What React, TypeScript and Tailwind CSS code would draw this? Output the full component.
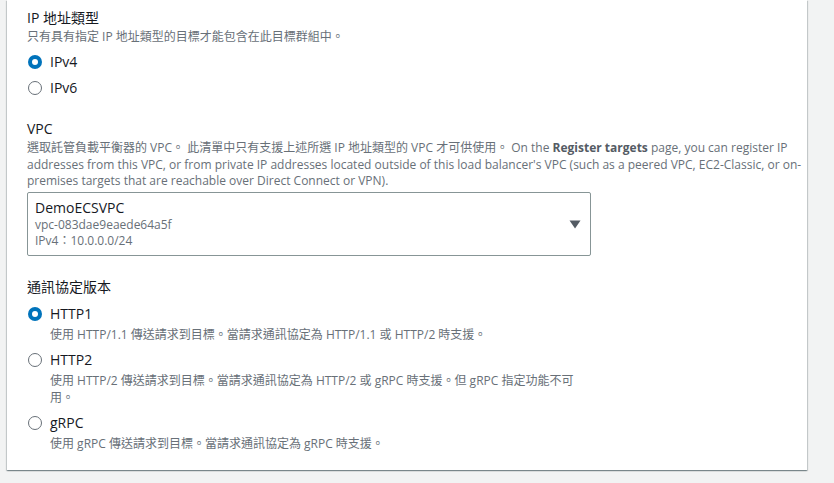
import React from "react";

const FONT = {
  fontFamily:
    '"Open Sans", "Noto Sans CJK TC", "Noto Sans", sans-serif',
};

function Radio({ checked }: { checked: boolean }) {
  return checked ? (
    <span className="flex h-[14px] w-[14px] shrink-0 items-center justify-center rounded-full bg-[#0073bb]">
      <span className="h-[6px] w-[6px] rounded-full bg-white" />
    </span>
  ) : (
    <span className="h-[14px] w-[14px] shrink-0 rounded-full border border-[#687078] bg-white" />
  );
}

function Option({
  label,
  checked,
  desc,
}: {
  label: string;
  checked: boolean;
  desc?: string;
}) {
  return (
    <div className="flex gap-[8px]">
      <div className="flex h-[22px] items-center pl-[1px]">
        <Radio checked={checked} />
      </div>
      <div className="flex flex-col">
        <span className="text-[14px] leading-[22px] text-[#16191f]">{label}</span>
        {desc && (
          <span className="mt-[1px] w-[536px] text-[12px] leading-[17px] text-[#687078]">
            {desc}
          </span>
        )}
      </div>
    </div>
  );
}

export default function App() {
  return (
    <div
      className="h-[483px] w-[834px] overflow-hidden bg-[#f2f3f3]"
      style={FONT}
    >
      <div className="ml-[7px] w-[800px] bg-white pb-[18px] pl-[20px] pr-[20px] pt-[7px] shadow-[0_1px_1px_0_rgba(0,28,36,0.3),1px_1px_1px_0_rgba(0,28,36,0.15),-1px_1px_1px_0_rgba(0,28,36,0.15)]">
        {/* IP address type */}
        <div className="flex flex-col">
          <span className="text-[14px] leading-[22px] text-[#16191f]">IP 地址類型</span>
          <span className="text-[12px] leading-[16px] text-[#687078]">
            只有具有指定 IP 地址類型的目標才能包含在此目標群組中。
          </span>
          <div className="mt-[6px] flex flex-col gap-[4px]">
            <Option label="IPv4" checked />
            <Option label="IPv6" checked={false} />
          </div>
        </div>

        {/* VPC */}
        <div className="mt-[19px] flex flex-col">
          <span className="text-[14px] leading-[22px] text-[#16191f]">VPC</span>
          <p className="w-[777px] text-[12px] leading-[16.5px] text-[#687078]">
            選取託管負載平衡器的 VPC。 此清單中只有支援上述所選 IP 地址類型的 VPC 才可供使用。 On the{" "}
            <b className="font-bold text-[#545b64]">Register targets</b> page, you can register IP
            addresses from this VPC, or from private IP addresses located outside of this load
            balancer's VPC (such as a peered VPC, EC2-Classic, or on-premises targets that are
            reachable over Direct Connect or VPN).
          </p>
          <div className="mt-[2px] flex h-[64px] w-[564px] items-center justify-between rounded-[2px] border border-[#879596] pl-[7px] pr-[7px] pt-[1px]">
            <div className="flex flex-col">
              <span className="text-[14px] leading-[18px] text-[#16191f]">DemoECSVPC</span>
              <span className="text-[12px] leading-[16px] text-[#687078]">vpc-083dae9eaede64a5f</span>
              <span className="text-[12px] leading-[16px] text-[#687078]">IPv4：10.0.0.0/24</span>
            </div>
            <svg width="12" height="9" viewBox="0 0 12 9" className="mr-[2px]">
              <path d="M0.5 0.5 L11.5 0.5 L6 8.5 Z" fill="#545b64" />
            </svg>
          </div>
        </div>

        {/* Protocol version */}
        <div className="mt-[20px] flex flex-col">
          <span className="text-[14px] leading-[22px] text-[#16191f]">通訊協定版本</span>
          <div className="mt-[5px] flex flex-col gap-[6px]">
            <Option
              label="HTTP1"
              checked
              desc="使用 HTTP/1.1 傳送請求到目標。當請求通訊協定為 HTTP/1.1 或 HTTP/2 時支援。"
            />
            <Option
              label="HTTP2"
              checked={false}
              desc="使用 HTTP/2 傳送請求到目標。當請求通訊協定為 HTTP/2 或 gRPC 時支援。但 gRPC 指定功能不可用。"
            />
            <Option
              label="gRPC"
              checked={false}
              desc="使用 gRPC 傳送請求到目標。當請求通訊協定為 gRPC 時支援。"
            />
          </div>
        </div>
      </div>
    </div>
  );
}
